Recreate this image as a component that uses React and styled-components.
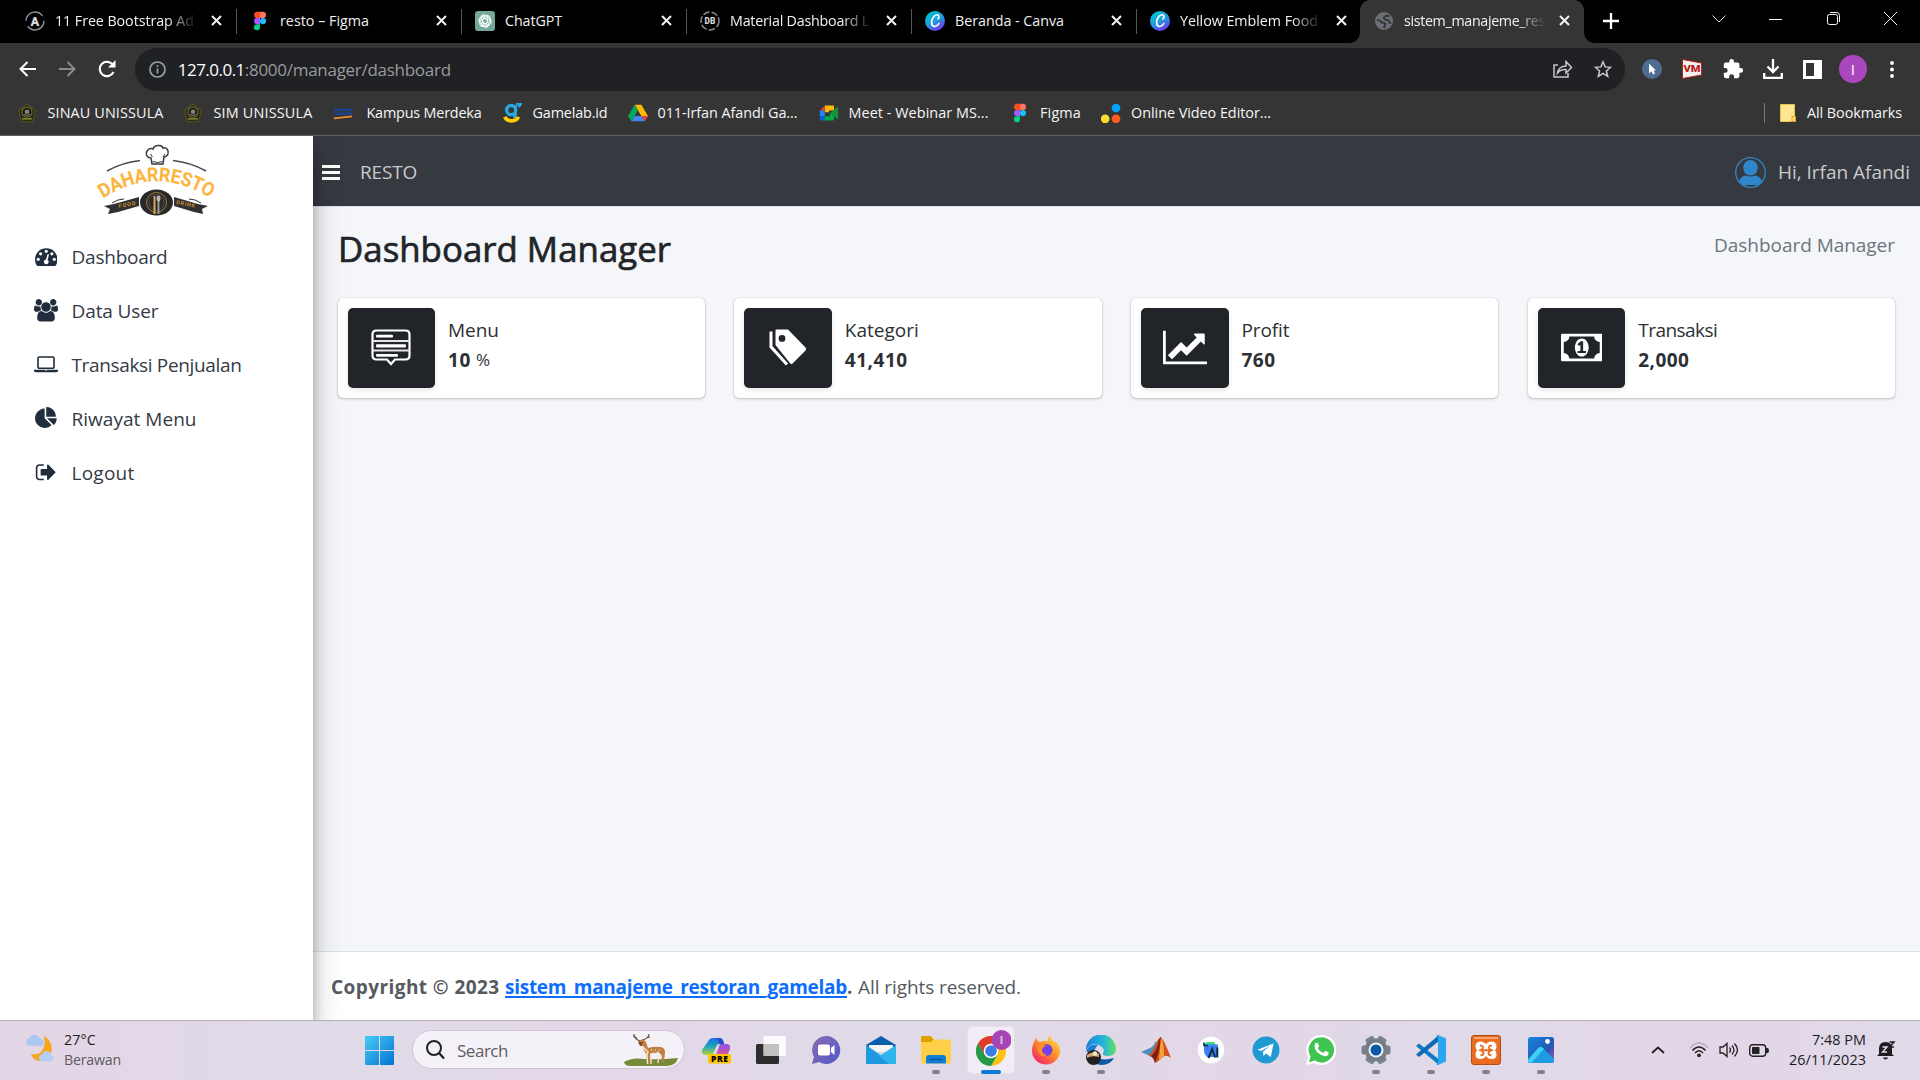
import React, { useLayoutEffect, useRef, useState } from 'react';
import styled, { createGlobalStyle, css } from 'styled-components';

const GlobalStyle = createGlobalStyle`
  * { box-sizing: border-box; }
  html, body { margin: 0; padding: 0; }
  body {
    width: 1920px; height: 1080px; overflow: hidden;
    font-family: "Open Sans", "Noto Sans", sans-serif;
    background: #000;
  }
  svg { display: block; flex: none; }
`;

/* ---------- text that keeps a fixed advance width ---------- */
const LabelBox = styled.span`
  display: inline-block;
  flex: none;
  width: ${p => p.$w}px;
  white-space: pre;
  text-decoration: inherit;
`;
function Label({ w, children }) {
  const ref = useRef(null);
  const [spacing, setSpacing] = useState(0);
  useLayoutEffect(() => {
    const natural = ref.current.getBoundingClientRect().width;
    setSpacing((w - natural) / String(children).length);
  }, []);
  return (
    <LabelBox $w={w}>
      <span ref={ref} style={{ letterSpacing: spacing }}>{children}</span>
    </LabelBox>
  );
}

/* ---------- icons ---------- */
const Icon = ({ s = 20, w, h, box = '0 0 24 24', children, ...rest }) => (
  <svg width={w || s} height={h || s} viewBox={box} fill="none" {...rest}>{children}</svg>
);
const FigmaIcon = () => (
  <Icon s={20}>
    <path d="M12 1H8.500a3.700 3.700 0 0 0 0 7.400H12z" fill="#f24e1e" />
    <path d="M12 1h3.500a3.700 3.700 0 0 1 0 7.400H12z" fill="#ff7262" />
    <path d="M12 8.400H8.500a3.700 3.700 0 0 0 0 7.400H12z" fill="#a259ff" />
    <circle cx="15.600" cy="12.100" r="3.700" fill="#1abcfe" />
    <path d="M12 15.800H8.500a3.700 3.700 0 1 0 3.500 3.700z" fill="#0acf83" />
  </Icon>
);
const RingIcon = ({ text }) => (
  <Icon s={20}>
    <circle cx="12" cy="12" r="10.800" stroke="#8b8e93" strokeWidth="1.800" strokeDasharray={text === 'A' ? '27 7' : '8 2.500'} />
    <text x="12" y={text === 'A' ? 17.500 : 15.800} textAnchor="middle" fontFamily="Roboto" fontWeight="900" fontSize={text === 'A' ? 15.500 : 10} fill="#d5d6d8">{text}</text>
  </Icon>
);
const ChatGptIcon = () => (
  <Icon s={20}>
    <rect width="24" height="24" rx="4" fill="#74aa9c" />
    {[0, 60, 120, 180, 240, 300].map(a => (
      <path key={a} transform={`rotate(${a} 12 12)`} d="M9 8.200 12.800 6a3.600 3.600 0 0 1 5.400 3.100v4M12 8.600l3 1.700v3.500" stroke="#fff" strokeWidth="1.300" />
    ))}
  </Icon>
);
const CanvaIcon = ({ id }) => (
  <Icon s={20}>
    <defs><linearGradient id={id} x1=".2" y1="0" x2=".75" y2="1"><stop stopColor="#00c4cc" /><stop offset=".5" stopColor="#1f9fe0" /><stop offset="1" stopColor="#7d2ae8" /></linearGradient></defs>
    <circle cx="12" cy="12" r="12" fill={`url(#${id})`} />
    <path d="M15.600 9.400c2-1.800 1.200-5.200-1.500-4.900-4 .5-7 6.900-6 11.200 1.100 4.200 5.900 3.600 8.500-.6" stroke="#fff" strokeWidth="2" strokeLinecap="round" />
  </Icon>
);
const GlobeIcon = () => (
  <Icon s={18}>
    <circle cx="12" cy="12" r="12" fill="#6b6f75" />
    <path d="M2.500 10.500q3.500 0 5 2t4 2 2 2.500-2 4.500M19.500 5.500q-3-1-5.500 0t-2 3 3.500 2 3.500 2.500 2.500 1.500" stroke="#353535" strokeWidth="2.600" />
  </Icon>
);
const Crest = () => (
  <Icon s={20}>
    <path d="M12 1.500 22 9l-3 13.500H5L2 9z" fill="#2a2c14" stroke="#55531f" strokeWidth="1.300" />
    <circle cx="12" cy="11" r="6" fill="#191a0c" stroke="#6f6c3c" strokeWidth="1.300" />
    <circle cx="12" cy="10.500" r="2.800" fill="#84857c" />
    <path d="M8 13.500q4 3 8 0" stroke="#84857c" strokeWidth="1.200" />
    <path d="M6 19h12" stroke="#7d7c2c" strokeWidth="2" />
  </Icon>
);
const KampusIcon = () => (
  <Icon s={20}>
    <path d="M1 8.500c3-2 4 1 7 0s5-1 8 0 4-1 7-1M2 13c4-1 7 1 11 0s6 0 9-1" stroke="#1746a0" strokeWidth="2.600" />
    <path d="M1 18.500 23 16" stroke="#f28b3a" strokeWidth="2" />
  </Icon>
);
const GamelabIcon = () => (
  <Icon s={20}>
    <circle cx="11" cy="8.500" r="5.500" stroke="#2ba7e0" strokeWidth="4" />
    <path d="M16.500 2v10c0 4-1 5-3 5.500M19 1l4-.5-2 3z" stroke="#2ba7e0" strokeWidth="3" />
    <path d="M3.500 16.500c2 6.500 14 6.500 16 0" stroke="#ffd000" strokeWidth="4.500" />
  </Icon>
);
const DriveIcon = () => (
  <Icon s={20}>
    <path d="M8 2h8l8 13.500h-8z" fill="#ffba00" /><path d="M8 2 0 15.500 4 22l8-13.300z" fill="#00a85a" />
    <path d="M4 22h16l4-6.500H8z" fill="#4285f4" /><path d="m20 22 4-6.500h-8z" fill="#ea4335" />
  </Icon>
);
const MeetIcon = () => (
  <Icon s={20}>
    <path d="M7 3h11v6h-6v2H7z" fill="#ffba00" /><path d="M1 9 7 3v6z" fill="#ea4335" /><path d="M1 9h6v7H1z" fill="#2684fc" />
    <path d="M1 16h6v5H2.500Q1 21 1 19.500z" fill="#0066da" /><path d="M7 16h6v-3l5-4v10.500q0 1.500-1.500 1.500H7z" fill="#00ac47" /><path d="m13.500 12 8-7q1.500-1 1.500 1v12q0 2-1.500 1z" fill="#14913e" />
  </Icon>
);
const DotsIcon = () => (
  <Icon s={20}>
    <circle cx="18" cy="6" r="5.200" fill="#00a4ff" /><circle cx="5" cy="19" r="5.200" fill="#ffdb2c" /><circle cx="18" cy="19" r="5.200" fill="#ff5a1f" />
  </Icon>
);
const CloseIcon = () => <Icon s={11} box="0 0 11 11"><path d="m1 1 9 9M10 1l-9 9" stroke="#f3f3f3" strokeWidth="2" /></Icon>;

/* ---------- browser chrome ---------- */
const Desktop = styled.div`
  width: 1920px; height: 1080px;
  display: flex; flex-direction: column;
`;
const TabStrip = styled.div`
  height: 43px; flex: none; background: #000; color: #f1f1f1;
  display: flex; padding-left: 11px; font-size: 14.3px;
`;
const TabIcon = styled.span`width: 20px; display: flex; justify-content: center; flex: none;`;
const TabTitle = styled.span`
  width: 142px; margin-left: 10px; margin-right: 14px; height: 22px; line-height: 21px; flex: none;
  ${p => p.$fade && css`mask-image: linear-gradient(90deg, #000 112px, transparent 142px);`}
`;
const Tab = styled.div`
  position: relative;
  width: ${p => (p.$active || p.$last ? 224 : 225)}px; height: 43px; flex: none;
  display: flex; align-items: center; padding: 0 14px 2px 14px;
  ${p => p.$active && css`
    background: #353535; border-radius: 10px 10px 0 0;
    ${TabTitle} { margin-right: 13px; }
    &::before, &::after {
      content: ''; position: absolute; bottom: 0; width: 10px; height: 10px;
    }
    &::before { left: -10px; background: radial-gradient(circle at 0 0, transparent 9.500px, #353535 10px); }
    &::after { right: -10px; background: radial-gradient(circle at 100% 0, transparent 9.500px, #353535 10px); }
  `}
`;
const Divider = styled.i`
  position: absolute; right: -1px; top: 9px; width: 1px; height: 25px; background: #55575b;
`;
const NewTab = styled.div`width: 54px; display: flex; align-items: center; justify-content: center; padding-bottom: 1px;`;
const WindowButtons = styled.div`
  margin-left: auto; display: flex; padding: 0 0 6px; width: 230px; align-items: center;
`;
const WinButton = styled.span`width: 57.300px; display: flex; justify-content: center;`;

const Toolbar = styled.div`
  height: 49px; flex: none; background: #353535; display: flex; align-items: center; padding: 4px 10px 1px 7px;
`;
const ToolButton = styled.span`
  width: ${p => p.$w || 40.100}px; display: flex; justify-content: center; flex: none;
`;
const Omnibox = styled.div`
  width: 1490px; height: 43px; border-radius: 22px; background: #202124; flex: none; margin-left: 8px; margin-right: 7px;
  display: flex; align-items: center; padding-left: 14px; padding-right: 2px; color: #fff; font-size: 17px;
`;
const UrlHost = styled.span`margin-left: 11.500px; display: flex;`;
const UrlPath = styled.span`color: #9a9b9d; flex: 1; display: flex;`;
const Avatar = styled.span`
  width: 28px; height: 28px; border-radius: 50%; background: #ab47bc; color: #fff; font-size: 15px;
  display: flex; align-items: center; justify-content: center;
`;
const Bookmarks = styled.div`
  height: 44px; flex: none; background: #353535; border-bottom: 1px solid #606062; color: #f5f5f5;
  display: flex; align-items: center; padding: 0 18px 2px 17px; font-size: 14.400px;
`;
const Bookmark = styled.div`
  width: ${p => p.$w}px; display: flex; align-items: center; gap: ${p => p.$gap || 10.500}px; flex: none;
`;
const AllBookmarks = styled.div`
  margin-left: auto; display: flex; align-items: center; gap: 11px; border-left: 1px solid #77787a; height: 20px; padding-left: 15px;
`;

/* ---------- page ---------- */
const Page = styled.div`flex: 1; min-height: 0; display: flex; background: #f4f6f9;`;
const Sidebar = styled.aside`
  position: relative; z-index: 2;
  width: 313px; flex: none; background: #fff; display: flex; flex-direction: column;
  box-shadow: 0 14px 28px rgba(0,0,0,.25), 0 10px 10px rgba(0,0,0,.22);
  clip-path: inset(0 -50px 0 0);
`;
const Brand = styled.div`height: 94px; padding: 3px 0 0 93px; flex: none;`;
const NavItem = styled.a`
  height: 54px; display: flex; align-items: center; padding-left: 34px; gap: 13.500px; color: #343a46; font-size: 19px;
`;
const NavGlyph = styled.span`width: 24px; display: flex; justify-content: center; color: #1f2d3d; padding-bottom: 1px;`;
const Main = styled.main`flex: 1; display: flex; flex-direction: column; min-width: 0;`;
const Navbar = styled.header`
  height: 71px; flex: none; background: #363940; border-bottom: 1px solid #dee2e6; color: #c9cacc;
  display: flex; align-items: center; padding: 2px 10px 0 9px; font-size: 19px;
`;
const NavTitle = styled.span`margin-left: 20px; display: flex;`;
const UserMenu = styled.span`margin-left: auto; display: flex; align-items: center; gap: 12px;`;
const Content = styled.section`flex: 1; padding: 20px 25px 0;`;
const Heading = styled.div`display: flex; justify-content: space-between; align-items: flex-start; height: 71px;`;
const Title = styled.h1`
  margin: -2px 0 0; font-size: 34.800px; line-height: 47px; font-weight: 400; color: #212529; display: flex;
  -webkit-text-stroke: .7px #212529;
`;
const Crumb = styled.span`font-size: 19px; color: #6c757d; line-height: 26px; padding-top: 5px; display: flex;`;
const Cards = styled.div`display: grid; grid-template-columns: repeat(4, 1fr); gap: 29.500px; margin-left: -.5px;`;
const Card = styled.div`
  height: 100px; background: #fff; border-radius: 5px; padding: 10px; display: flex;
  box-shadow: 0 0 1px rgba(0,0,0,.25), 0 1px 3px rgba(0,0,0,.22);
`;
const CardIcon = styled.div`
  width: 87.500px; height: 80px; border-radius: 5px; background: #212529; display: flex; align-items: center; justify-content: center;
  box-shadow: 0 2px 5px rgba(0,0,0,.1); color: #fff; padding-bottom: 1px;
`;
const CardBody = styled.div`
  padding: 7px 0 0 13px; font-size: 19px; line-height: 30px; color: #2c3034;
`;
const CardText = styled.div`display: flex; height: 30px;`;
const Strong = styled.b`font-weight: 700; display: flex;`;
const Percent = styled.small`font-size: 17px; padding-left: 5px; display: flex;`;
const Footer = styled.footer`
  height: 69px; flex: none; border-top: 1px solid #dee2e6; background: #fff; color: #555a5f;
  padding: 1px 0 0 18px; font-size: 19px; display: flex; align-items: center;
`;
const FootLink = styled.a`
  color: #0d6efd; text-decoration: underline; text-decoration-thickness: 2px; text-underline-offset: 2px; text-decoration-skip-ink: auto; display: flex;
`;

/* ---------- taskbar ---------- */
const Taskbar = styled.div`
  height: 60px; flex: none; border-top: 1px solid #b1adb6; display: flex; color: #1b1b1f;
  background: linear-gradient(90deg, #e3d6e6 0, #e0dae8 18%, #e3d7e8 32%, #e0dae8 48%, #e2d7e7 66%, #e0dae8 78%, #e3d5e8 88%, #e0dae8 100%);
`;
const Weather = styled.div`width: 365px; padding: 9px 0 0 25px; display: flex; gap: 9px;`;
const WeatherIcon = styled.span`padding-top: 4px;`;
const WeatherText = styled.div`font-size: 14.200px; line-height: 20px; display: flex; flex-direction: column;`;
const Muted = styled.span`color: #5c5a60; display: flex;`;
const StartButton = styled.div`width: 29px; padding-top: 15px; margin-right: 18px;`;
const SearchBox = styled.div`
  width: 273px; height: 39px; margin-top: 9px; border-radius: 20px; background: #f5f1f8; border: 1px solid #d0c6d4;
  display: flex; align-items: center; padding: 1px 5px 0 12px; gap: 12px; font-size: 17px; color: #5e5c62;
`;
const Deer = styled.span`margin-left: auto;`;
const Apps = styled.div`display: flex; margin-left: 3px;`;
const AppSlot = styled.div`
  width: 55px; height: 59px; display: flex; flex-direction: column; align-items: center; position: relative; padding-top: 14px;
`;
const AppFrame = styled.div`
  width: 48px; height: 48px; margin-top: -9px; padding-top: 3px; border-radius: 5px; background: #f1ecf5; border: 1px solid #e7e1eb;
  display: flex; justify-content: center;
`;
const Running = styled.i`
  position: absolute; top: 49px; height: 4px; border-radius: 2px;
  width: ${p => (p.$active ? 20 : 8)}px; background: ${p => (p.$active ? '#0a78d4' : '#867f8b')};
`;
const Tray = styled.div`margin-left: auto; display: flex; align-items: center; padding-right: 13px; height: 59px;`;
const TrayCell = styled.span`width: ${p => p.$w || 30}px; display: flex; justify-content: center; padding-bottom: 1px;`;
const Clock = styled.div`
  width: 92px; margin-right: 1px; font-size: 14.400px; line-height: 20px; display: flex; flex-direction: column; align-items: flex-end; padding-bottom: 1px;
`;

const Pre = () => (
  <Icon s={30} box="-1 0 30 30">
    <defs><linearGradient id="cpA" x1="0" y1="0" x2="0" y2="1"><stop stopColor="#1b6fe0" /><stop offset=".5" stopColor="#1fa5b8" /><stop offset="1" stopColor="#b5d33c" /></linearGradient>
      <linearGradient id="cpB" x1="0" y1="0" x2="0" y2="1"><stop stopColor="#8b52e8" /><stop offset="1" stopColor="#f0588a" /></linearGradient></defs>
    <path d="M7 5q1-2 4-2h7q3 0 4 6h-5q-2 0-3 3l-2 5q-1 3-5 3H4q-5 0-4-5z" fill="url(#cpA)" />
    <path d="M14 3h4q3 0 4 6h-5q-1-5-3-6z" fill="#2450cf" />
    <path d="M18 9h6q5 0 4 5l-2 5q-1 4-6 4h-9q3-2 4-6z" fill="url(#cpB)" />
    <rect x="6" y="19" width="23" height="9.500" rx="2" fill="#ffc400" />
    <text x="17.500" y="26.800" fontSize="8.500" fontWeight="800" fontFamily="Open Sans" textAnchor="middle" fill="#000" textLength="17">PRE</text>
  </Icon>
);
const TaskView = () => (
  <Icon s={30} box="0 0 30 30"><rect y="9" width="23" height="20" rx="1.500" fill="#2d2d2d" /><rect x="7.500" y="1" width="22.500" height="20" rx="1.500" fill="#fff" opacity=".85" /><rect x="7.500" y="9" width="15.500" height="12" fill="#b9b9b9" opacity=".8" /></Icon>
);
const Chat = () => (
  <Icon s={30} box="0 0 30 30"><defs><linearGradient id="chat" x1="0" y1="0" x2="1" y2="1"><stop stopColor="#8a6cae" /><stop offset="1" stopColor="#5059c9" /></linearGradient></defs>
    <path d="M15 1a14 14 0 1 1-7 26l-7 2 2-7A14 14 0 0 1 15 1z" fill="url(#chat)" /><rect x="7" y="9.500" width="12" height="11" rx="2" fill="#fff" /><path d="m20 13 3.500-3v10L20 17z" fill="#fff" /></Icon>
);
const Mail = () => (
  <Icon s={30} box="0 0 30 30"><path d="M0 10 15 1l15 9v6H0z" fill="#0b5cad" /><path d="M3 10h24v7H3z" fill="#f4f4f4" /><path d="M0 10v19h30V10L15 20z" fill="#2fb4ee" /><path d="m0 10 23 19H0z" fill="#1f98e0" /></Icon>
);
const Explorer = () => (
  <Icon s={30} box="0 0 30 30"><path d="M0 2q0-1 1.500-1H10l3 4h15.500Q30 5 30 6.500V12H0z" fill="#e0a100" /><path d="M0 7h10l3-2.500h15.500Q30 4.500 30 6v21q0 1.500-1.500 1.500h-27Q0 28.500 0 27z" fill="#ffcf48" /><path d="M5 28.500V23q0-3 3-3h14q3 0 3 3v5.500z" fill="#117dd2" /><path d="M9 24.500h12" stroke="#0a5599" strokeWidth="1.500" /></Icon>
);
const Chrome = () => (
  <Icon w={40} h={36} box="-5 -6 40 36"><circle cx="15" cy="15" r="15" fill="#fbc116" />
    <path d="M2 7.500A15 15 0 0 1 28 7.500H15L8.500 19z" fill="#e33b2e" /><path d="M2 7.500A15 15 0 0 0 15 30l6.500-11.200H8.500z" fill="#229a4c" />
    <circle cx="15" cy="15" r="7.300" fill="#fff" /><circle cx="15" cy="15" r="5.800" fill="#3b7de9" />
    <circle cx="25.500" cy="4" r="10" fill="#a645b5" /><path d="M25.500 0v8" stroke="#dcb9e2" strokeWidth="2" /></Icon>
);
const Firefox = () => (
  <Icon s={30} box="0 0 30 30"><defs><linearGradient id="ff" x1="1" y1="0" x2=".2" y2="1"><stop stopColor="#fff14a" /><stop offset=".45" stopColor="#ff9a26" /><stop offset="1" stopColor="#f3206b" /></linearGradient></defs>
    <path d="M5 3q1 3 4 4 5-2 8-1 0-4 2-6 1 5 5 8 0-2-1-3 6 5 6 11a14 13.500 0 0 1-28 0Q1 9 5 3z" fill="url(#ff)" /><circle cx="15.500" cy="15" r="6" fill="#7542e5" /><path d="M6 10q6-2 9 1-4 1-4 4 0 4 5 5-6 3-9-3z" fill="#ff8f20" /></Icon>
);
const Edge = () => (
  <Icon s={30} box="0 0 30 30"><defs><linearGradient id="edge" x1="0" x2="1"><stop stopColor="#1583d8" /><stop offset=".6" stopColor="#28b8d8" /><stop offset="1" stopColor="#62e25e" /></linearGradient></defs>
    <path d="M0 15a15 15 0 0 1 30-1q0 7-8 7-6 0-5-3 2-3-1-6-9-7-16 3z" fill="url(#edge)" /><path d="M9 16q1 12 19 7-4 7-12 7-9 0-11-8z" fill="#0c59a4" /><path d="M0 16q4-8 12-6-6 5-1 13z" fill="#1b7fd4" />
    <circle cx="7.500" cy="22.500" r="7.500" fill="#24201d" /><path d="M1 20q6-5 12-1v3q-7-2-12 1z" fill="#d6a572" /><circle cx="9" cy="18.500" r="2.200" fill="#f4e5cf" /></Icon>
);
const Matlab = () => (
  <Icon s={30} box="0 0 30 30"><path d="m0 17 9-4q3-1 6-7l2 4-7 12-3-2z" fill="#4b8fbe" /><path d="M7 20q4-1 7-9 3-8 6-9 3 3 10 21-5-4-8-1-4 4-8 6-1-6-7-8z" fill="#d2511e" /><path d="M20 2q-1 14-6 26-1-5-4-7 5-4 7-12 1-6 3-7z" fill="#7c1d18" /><path d="M20 2q3 6 3 19l-5 4z" fill="#f7a437" /></Icon>
);
const AndroidStudio = () => (
  <Icon s={30} box="0 0 30 30"><circle cx="15" cy="15" r="13.300" fill="#fff" /><path d="M8.500 10V8.500l3-1.500h6.500l2 3z" fill="#3ddc84" /><path d="M8 9.500h14V22H11q-3-3-3-6z" fill="#3f7df2" /><path d="M8 7.500v3h4" stroke="#073042" strokeWidth="1.600" /><path d="m12.500 23 3.700-9 3 8.500M21.300 12.500v10" stroke="#073042" strokeWidth="2" /></Icon>
);
const Telegram = () => (
  <Icon s={30} box="0 0 30 30"><circle cx="15" cy="15" r="13.500" fill="#2199d3" /><path d="m6.500 14.800 16-6.300-2.700 13.600-4.800-3.600-2.500 2.400-.5-4.200 7.300-6.300-9 5.500z" fill="#fff" /></Icon>
);
const WhatsApp = () => (
  <Icon s={30} box="0 0 30 30"><path d="M15 0a15 15 0 1 1-7 28l-8 2 2-8A15 15 0 0 1 15 0z" fill="#fff" /><path d="M15.300 2.300a12.600 12.600 0 1 1-6.500 23.300L3 27.200l1.600-5.600A12.600 12.600 0 0 1 15.300 2.300z" fill="#3fc351" /><path d="M9 8.500q2-1.700 3 0l1 2.500q0 1-1.300 2.200 2 3.600 5.600 4.800l1.500-1.800q.8-.6 3.700 1.200 1 .8-.8 3-3 2-8.200-1.300Q7 14.500 9 8.500z" fill="#fff" /></Icon>
);
const Settings = () => (
  <Icon s={30} box="0 0 30 30">{[0, 60, 120].map(a => <rect key={a} x="10.500" y="0.500" width="9" height="29" rx="2" fill="#78838c" transform={`rotate(${a + 30} 15 15)`} />)}
    <circle cx="15" cy="15" r="11.500" fill="#737e87" /><circle cx="15" cy="15" r="7.500" fill="#f2f4f6" /><circle cx="15" cy="15" r="5.500" fill="#0b58a8" /></Icon>
);
const VsCode = () => (
  <Icon s={30} box="0 0 30 30"><path d="M0 11 3 8.500l20 16V30z" fill="#0b7bc7" /><path d="M0 19.500 3 22 23 6V0z" fill="#0c6cb5" /><path d="m22 0 8 3.500v23L22 30q-1 0-2-1 2 0 2-2V3q0-2-2-2 1-1 2-1z" fill="#2aa5f2" /></Icon>
);
const Xampp = () => (
  <Icon s={30} box="0 0 30 30"><rect x=".5" y=".5" width="29" height="29" rx="2.500" fill="#ea6c20" stroke="#b04d12" /><path d="M3 3h24" stroke="#f5a471" strokeWidth="2" />
    <path d="M10 6.500q3 0 5 2.500 2-2.500 5-2.500 5.500 0 5.500 5 0 2-1.500 3.800 1.500 1.700 1.500 4.200 0 4.500-5 4.500-3.500 0-5.500-3-2 3-5.500 3-5 0-5-4.500 0-2.500 1.500-4.200-1.500-1.800-1.500-3.800 0-5 5.500-5z" fill="#fff" />
    <path d="M9 10.700q3-.5 3 2 0 1.500-2.500 2.500 3 1 3 3 0 2-3 2M21 10.700q-3-.5-3 2 0 1.500 2.500 2.500-3 1-3 3 0 2 3 2M11 15.200h8" stroke="#ea6c20" strokeWidth="1.900" /></Icon>
);
const Photos = () => (
  <Icon s={30} box="0 0 30 30"><defs><linearGradient id="pho" x1="0" y1="0" x2="1" y2="1"><stop stopColor="#1489e0" /><stop offset=".6" stopColor="#2456b5" /><stop offset="1" stopColor="#b052a8" /></linearGradient></defs>
    <rect x="2" y="2" width="26" height="26" rx="2.500" fill="url(#pho)" /><path d="m2 24 10-11q2.500-2.500 5 0l11 11v1.500q0 2.500-2.500 2.500h-21Q2 28 2 25.500z" fill="#1f9be3" /><path d="M2 25 12.500 13q2-2 4.500 0l1 1L5 28Q2 28 2 25z" fill="#3fd2f7" /><circle cx="21.500" cy="6.500" r="2.400" fill="#fff" /></Icon>
);

const APPS = [
  [Pre], [TaskView], [Chat], [Mail], [Explorer, 1], [Chrome, 2], [Firefox, 1], [Edge, 1], [Matlab], [AndroidStudio],
  [Telegram], [WhatsApp], [Settings, 1], [VsCode, 1], [Xampp, 1], [Photos, 1],
];

const Logo = () => (
  <Icon w={126} h={84} box="93 139 126 84" overflow="visible">
    <defs><path id="arch" d="M103 198.500Q156.500 163 214 200" /></defs>
    <path d="M151 158c-4 0-6-4-4-7s5-3 6-2c1-4 9-5 10-1 4-1 6 3 5 6-1 2-3 3-4 3l-1 7h-11z" stroke="#39393b" strokeWidth="1.500" />
    <path d="M152.500 161.500q5 2 10 0M150.500 154l2 3M163 157l2-3" stroke="#39393b" />
    <path d="M107 171Q122 162.500 140 160.500M173 160.500Q191 162.500 206 171" stroke="#4a4a4c" strokeWidth="1.500" />
    <text fontFamily="Roboto" fontWeight="600" fontSize="19" fill="#fbb53c" stroke="#fbb53c" strokeWidth=".3">
      <textPath href="#arch" textLength="114" lengthAdjust="spacingAndGlyphs">DAHARRESTO</textPath>
    </text>
    <path d="m104 206 10-2 25-7v9l-21 6-10 2 2-5zM208 206l-10-2-24-7v9l20 6 9 2-1-5z" fill="#313133" />
    <path d="M112 203q6-4 12-4M201 203q-6-4-12-4" stroke="#313133" />
    <text x="119" y="208" transform="rotate(-11 119 208)" fontFamily="Roboto" fontWeight="700" fontSize="5.500" fill="#c18b2c" textLength="17">FOOD</text>
    <text x="176" y="204" transform="rotate(11 176 204)" fontFamily="Roboto" fontWeight="700" fontSize="5.500" fill="#c18b2c" textLength="19">DRINK</text>
    <ellipse cx="156.500" cy="202.500" rx="16.500" ry="13" fill="#29292b" />
    <ellipse cx="156.500" cy="202.500" rx="10" ry="10" stroke="#a57c38" /><ellipse cx="156.500" cy="202.500" rx="7.500" ry="8" stroke="#55504a" />
    <path d="M154.500 196v18" stroke="#d9a650" strokeWidth="2" /><path d="M158.500 197v17" stroke="#a6a6a6" strokeWidth="1.700" /><ellipse cx="158.500" cy="198.500" rx="2" ry="3" fill="#b9b9b9" />
  </Icon>
);

const GAUGE = 'M384 1152q0-53-37.5-90.5t-90.5-37.5-90.5 37.5-37.5 90.5 37.5 90.5 90.5 37.5 90.5-37.5 37.5-90.5zm192-448q0-53-37.5-90.5t-90.5-37.5-90.5 37.5-37.5 90.5 37.5 90.5 90.5 37.5 90.5-37.5 37.5-90.5zm428 481l101-382q6-26-7.5-48.5t-38.5-29.5-48 6.5-30 39.5l-101 382q-60 5-107 43.5t-63 98.5q-20 77 20 146t117 89 146-20 89-117q16-60-6-117t-72-91zm660-33q0-53-37.5-90.5t-90.5-37.5-90.5 37.5-37.5 90.5 37.5 90.5 90.5 37.5 90.5-37.5 37.5-90.5zm-640-640q0-53-37.5-90.5t-90.5-37.5-90.5 37.5-37.5 90.5 37.5 90.5 90.5 37.5 90.5-37.5 37.5-90.5zm448 192q0-53-37.5-90.5t-90.5-37.5-90.5 37.5-37.5 90.5 37.5 90.5 90.5 37.5 90.5-37.5 37.5-90.5zm320 448q0 261-141 483-19 29-54 29h-1402q-35 0-54-29-141-221-141-483 0-182 71-348t191-286 286-191 348-71 348 71 286 191 191 286 71 348z';
const USERS = 'M593 896q-162 5-265 128h-134q-82 0-138-40.5t-56-118.5q0-353 124-353 6 0 43.5 21t97.5 42.5 119 21.5q67 0 133-23-5 37-5 66 0 139 81 256zm1071 637q0 120-73 189.5t-194 69.5h-874q-121 0-194-69.5t-73-189.5q0-53 3.5-103.5t14-109 26.5-108.5 43-97.5 62-81 85.5-53.5 111.5-20q10 0 43 21.5t73 48 107 48 135 21.5 135-21.5 107-48 73-48 43-21.5q61 0 111.5 20t85.5 53.5 62 81 43 97.5 26.5 108.5 14 109 3.5 103.5zm-1024-1277q0 106-75 181t-181 75-181-75-75-181 75-181 181-75 181 75 75 181zm704 384q0 159-112.5 271.5t-271.5 112.5-271.5-112.5-112.5-271.5 112.5-271.5 271.5-112.5 271.5 112.5 112.5 271.5zm576 225q0 78-56 118.5t-138 40.5h-134q-103-123-265-128 81-117 81-256 0-29-5-66 66 23 133 23 59 0 119-21.5t97.5-42.5 43.5-21q124 0 124 353zm-128-609q0 106-75 181t-181 75-181-75-75-181 75-181 181-75 181 75 75 181z';
const LAPTOP = 'M416 1280q-66 0-113-47t-47-113v-704q0-66 47-113t113-47h1088q66 0 113 47t47 113v704q0 66-47 113t-113 47h-1088zm-32-864v704q0 13 9.5 22.5t22.5 9.5h1088q13 0 22.5-9.5t9.5-22.5v-704q0-13-9.5-22.5t-22.5-9.5h-1088q-13 0-22.5 9.5t-9.5 22.5zm1376 928h160v96q0 40-47 68t-113 28h-1600q-66 0-113-28t-47-68v-96h1760zm-720 96q16 0 16-16t-16-16h-160q-16 0-16 16t16 16h160z';
const PIE = 'M768 890l546 546q-106 108-247.5 168t-298.5 60q-209 0-385.5-103t-279.5-279.5-103-385.5 103-385.5 279.5-279.5 385.5-103v762zm187 6h773q0 157-60 298.5t-168 247.5zm709-128h-768v-768q209 0 385.5 103t279.5 279.5 103 385.5z';
const EXIT = 'M704 1440q0 4 1 20t.5 26.5-3 23.5-10 19.5-20.5 6.5h-320q-119 0-203.5-84.5t-84.5-203.5v-704q0-119 84.5-203.5t203.5-84.5h320q13 0 22.5 9.5t9.5 22.5q0 4 1 20t.5 26.5-3 23.5-10 19.5-20.5 6.5h-320q-66 0-113 47t-47 113v704q0 66 47 113t113 47h312l11.5 1 11.5 3 8 5.5 7 9 2 13.5zm928-544q0 26-19 45l-544 544q-19 19-45 19t-45-19-19-45v-288h-448q-26 0-45-19t-19-45v-384q0-26 19-45t45-19h448v-288q0-26 19-45t45-19 45 19l544 544q19 19 19 45z';
const LINE = 'M2048 1536v128h-2048v-1536h128v1408h1920zM1920 288v435q0 21-19.5 29.5t-35.5-7.5l-121-121-633 633q-10 10-23 10t-23-10l-233-233-416 416-192-192 585-585q10-10 23-10t23 10l233 233 464-464-121-121q-16-16-7.5-35.5t29.5-19.5h435q14 0 23 9t9 23z';
const MONEY = 'M768 1152h384v-96h-128v-448h-114l-148 137 77 80q42-37 55-57h2v288h-128v96zm512-256q0 70-21 142t-59.5 134-101.5 101-138 39-138-39-101.5-101-59.5-134-21-142 21-142 59.5-134 101.5-101 138-39 138 39 101.5 101 59.5 134 21 142zm512 256v-512q-106 0-181-75t-75-181h-1152q0 106-75 181t-181 75v512q106 0 181 75t75 181h1152q0-106 75-181t181-75zm128-832v1152q0 26-19 45t-45 19h-1792q-26 0-45-19t-19-45v-1152q0-26 19-45t45-19h1792q26 0 45 19t19 45z';
const Solid = ({ d, vw, w, h }) => <svg width={w} height={h} viewBox={`0 0 ${vw} 1792`} fill="currentColor"><path d={d} /></svg>;

const NAV = [
  ['Dashboard', 96, GAUGE, 1792, 22.500, 22.500],
  ['Data User', 87, USERS, 1920, 24, 22.400],
  ['Transaksi Penjualan', 170, LAPTOP, 1920, 24, 22.400],
  ['Riwayat Menu', 125, PIE, 1792, 22.500, 22.500],
  ['Logout', 63, EXIT, 1792, 22.500, 22.500],
];

const MenuGlyph = () => (
  <Icon w={40} h={37} box="0 0 40 37">
    <path d="M5.500 1.500h29q4 0 4 4v21q0 4-4 4H24L20 35l-4-4.500H5.500q-4 0-4-4v-21q0-4 4-4z" stroke="#fff" strokeWidth="2.200" />
    <rect x="5" y="5.800" width="17" height="2.800" rx="1" fill="#fff" /><path d="M2 12h36M2 21.500h36" stroke="#e8e4ea" strokeWidth="2.200" />
    <rect x="5" y="15.200" width="30" height="3.200" rx="1" fill="#fff" /><rect x="5" y="25" width="22" height="2.800" rx="1" fill="#fff" />
  </Icon>
);
const TagGlyph = () => (
  <Icon w={40} h={37} box="0 0 40 37">
    <path fillRule="evenodd" d="M7.500 1.500Q7.500.5 8.500.5h11.500l17.500 18q1.500 1.500 0 3L24.500 34.500q-1 1-2.200 0L7.500 16zM14 6a3.400 3.400 0 1 0 0 6.800A3.400 3.400 0 0 0 14 6z" fill="#fff" />
    <path d="M5.300 1v16.500L22 36" stroke="#212529" strokeWidth="1.500" /><path d="M3 2.500v15.300L19 35.500" stroke="#fff" strokeWidth="3" />
  </Icon>
);
const CARDS = [
  ['Menu', 51, '10', 23, <MenuGlyph />, '%'],
  ['Kategori', 74, '41,410', 63, <TagGlyph />],
  ['Profit', 48, '760', 34, <Solid d={LINE} vw={2048} w={44.500} h={39} />],
  ['Transaksi', 79, '2,000', 51, <Solid d={MONEY} vw={1920} w={41.500} h={39} />],
];

const TABS = [
  ['11 Free Bootstrap Ad', 139, <RingIcon text="A" />, true],
  ['resto – Figma', 89, <FigmaIcon />],
  ['ChatGPT', 57, <ChatGptIcon />],
  ['Material Dashboard L', 139, <RingIcon text="DB" />, true],
  ['Beranda - Canva', 109, <CanvaIcon id="cv1" />],
  ['Yellow Emblem Food', 138, <CanvaIcon id="cv2" />, true],
  ['sistem_manajeme_res', 141, <GlobeIcon />, true],
];
const MARKS = [
  ['SINAU UNISSULA', 116, <Crest />, 166], ['SIM UNISSULA', 99, <Crest />, 150], ['Kampus Merdeka', 115, <KampusIcon />, 169, 13.500],
  ['Gamelab.id', 75, <GamelabIcon />, 126], ['011-Irfan Afandi Ga...', 140, <DriveIcon />, 191, 9.500], ['Meet - Webinar MS...', 140, <MeetIcon />, 191, 9.500],
  ['Figma', 41, <FigmaIcon />, 91, 10], ['Online Video Editor...', 140, <DotsIcon />, 171, 10],
];

export default function App() {
  return (
    <Desktop>
      <GlobalStyle />
      <TabStrip>
        {TABS.map(([t, w, ic, fade], i) => (
          <Tab key={t} $active={i === 6} $last={i === 5}>
            <TabIcon>{ic}</TabIcon>
            <TabTitle $fade={fade}><Label w={w}>{t}</Label></TabTitle>
            <CloseIcon />
            {i < 5 && <Divider />}
          </Tab>
        ))}
        <NewTab><Icon s={16} box="0 0 16 16"><path d="M8 0v16M0 8h16" stroke="#fff" strokeWidth="2.300" /></Icon></NewTab>
        <WindowButtons>
          <WinButton><Icon w={14} h={8} box="0 0 14 8"><path d="m.5.5 6.500 6.500L13.500.5" stroke="#ddd" /></Icon></WinButton>
          <WinButton><Icon w={13} h={2} box="0 0 13 2"><path d="M0 1.500h13" stroke="#fff" /></Icon></WinButton>
          <WinButton><Icon s={13} box="0 0 13 13"><rect x=".5" y="2.500" width="10" height="10" rx="2" stroke="#fff" /><path d="M3 .5h6.500q3 0 3 3V10" stroke="#fff" /></Icon></WinButton>
          <WinButton><Icon s={13} box="0 0 13 13"><path d="m0 0 13 13M13 0 0 13" stroke="#fff" /></Icon></WinButton>
        </WindowButtons>
      </TabStrip>
      <Toolbar>
        <ToolButton><Icon w={17} h={16} box="0 0 17 16"><path d="M17 8H1.500M8.500 1l-7 7 7 7" stroke="#fff" strokeWidth="2" /></Icon></ToolButton>
        <ToolButton><Icon w={17} h={16} box="0 0 17 16"><path d="M0 8h15.500M8.500 1l7 7-7 7" stroke="#8b8b8b" strokeWidth="2" /></Icon></ToolButton>
        <ToolButton><Icon s={18} box="0 0 18 18"><path d="M15.500 12A7.200 7.200 0 1 1 15 5" stroke="#fff" strokeWidth="2.200" /><path d="M17.500 0v7.500H10z" fill="#fff" /></Icon></ToolButton>
        <Omnibox>
          <Icon s={17} box="0 0 17 17"><circle cx="8.500" cy="8.500" r="7.500" stroke="#9aa0a6" strokeWidth="1.700" /><path d="M8.500 7.500v5M8.500 4.300v1.800" stroke="#9aa0a6" strokeWidth="1.700" /></Icon>
          <UrlHost><Label w={67}>127.0.0.1</Label></UrlHost>
          <UrlPath><Label w={206}>:8000/manager/dashboard</Label></UrlPath>
          <ToolButton><Icon w={20} h={18} box="0 0 20 18"><path d="M5 5H1v12h14v-4" stroke="#c6c8ca" strokeWidth="1.500" /><path d="M4.500 13Q6 6 13 6V1.500L18.500 7.500 13 13V9.500Q8 9 4.500 13z" stroke="#c6c8ca" strokeWidth="1.500" /></Icon></ToolButton>
          <ToolButton><Icon s={18} box="0 0 18 18"><path d="m9 1.800 2.100 5.100 5.500.4-4.200 3.600 1.300 5.400L9 13.400l-4.700 2.900 1.300-5.400-4.200-3.600 5.500-.4z" stroke="#c6c8ca" strokeWidth="1.500" /></Icon></ToolButton>
        </Omnibox>
        <ToolButton><Icon s={20} box="0 0 20 20"><circle cx="10" cy="10" r="10" fill="#4f6b92" /><path d="M7 4.500v10l2.500-2.300L11 15.500l2-1-1.500-3H14z" fill="#fff" /></Icon></ToolButton>
        <ToolButton><Icon s={20} box="0 0 20 20"><path d="m.5.500 19 3.500v12L.5 19.500z" fill="#f2f2f2" stroke="#b71c1c" /><text x="10" y="13.300" textAnchor="middle" textLength="17" lengthAdjust="spacingAndGlyphs" fontSize="9.500" fontWeight="900" fontFamily="Roboto" fill="#b71c1c">VM</text></Icon></ToolButton>
        <ToolButton><Icon s={22}><path d="M20.500 11H19V7a2 2 0 0 0-2-2h-4V3.500a2.500 2.500 0 0 0-5 0V5H4a2 2 0 0 0-2 2v3.800h1.500a2.700 2.700 0 0 1 0 5.400H2V20a2 2 0 0 0 2 2h3.800v-1.500a2.700 2.700 0 0 1 5.400 0V22H17a2 2 0 0 0 2-2v-4h1.500a2.500 2.500 0 0 0 0-5z" fill="#fff" /></Icon></ToolButton>
        <ToolButton><Icon s={20} box="0 0 20 20"><path d="M10 0v13M4.500 7.500 10 13l5.500-5.500M1.200 14v4.800h17.600V14" stroke="#fff" strokeWidth="2.300" /></Icon></ToolButton>
        <ToolButton><Icon s={19} box="0 0 19 19"><path fillRule="evenodd" d="M0 0h19v19H0zM3 3v13h8V3z" fill="#fff" /></Icon></ToolButton>
        <ToolButton><Avatar>I</Avatar></ToolButton>
        <ToolButton $w={38}><Icon w={4} h={17} box="0 0 4 17"><circle cx="2" cy="2" r="1.900" fill="#fff" /><circle cx="2" cy="8.500" r="1.900" fill="#fff" /><circle cx="2" cy="15" r="1.900" fill="#fff" /></Icon></ToolButton>
      </Toolbar>
      <Bookmarks>
        {MARKS.map(([t, w, ic, bw, gap]) => <Bookmark key={t} $w={bw} $gap={gap}>{ic}<Label w={w}>{t}</Label></Bookmark>)}
        <AllBookmarks>
          <Icon w={16} h={18} box="0 0 16 18"><path d="M.5.5h14v12h1v5H.5z" fill="#ffe591" stroke="#e8c24a" /><path d="M12 17.500v-5h3.500v5z" fill="#ffdf70" stroke="#d9a520" /></Icon>
          <Label w={95}>All Bookmarks</Label>
        </AllBookmarks>
      </Bookmarks>

      <Page>
        <Sidebar>
          <Brand><Logo /></Brand>
          {NAV.map(([t, w, d, vw, iw, ih]) => (
            <NavItem key={t}><NavGlyph><Solid d={d} vw={vw} w={iw} h={ih} /></NavGlyph><Label w={w}>{t}</Label></NavItem>
          ))}
        </Sidebar>
        <Main>
          <Navbar>
            <Icon w={18} h={15} box="0 0 18 15"><path d="M0 1.500h18M0 7.500h18M0 13.500h18" stroke="#fff" strokeWidth="2.800" /></Icon>
            <NavTitle><Label w={57}>RESTO</Label></NavTitle>
            <UserMenu>
              <Icon s={31} box="0 0 31 31"><circle cx="15.500" cy="15.500" r="14.800" stroke="#2f86c8" strokeWidth="1.300" /><ellipse cx="15.500" cy="10.700" rx="7.300" ry="7.800" fill="#2f86c8" /><path d="M4 24.500q2-5.500 7-6 4.500 2 9 0 5 .5 7 6-3 3.500-5 3.500H9q-3-1-5-3.500z" fill="#2f86c8" /></Icon>
              <Label w={132}>Hi, Irfan Afandi</Label>
            </UserMenu>
          </Navbar>
          <Content>
            <Heading>
              <Title><Label w={333}>Dashboard Manager</Label></Title>
              <Crumb><Label w={181}>Dashboard Manager</Label></Crumb>
            </Heading>
            <Cards>
              {CARDS.map(([t, w, n, nw, ic, unit]) => (
                <Card key={t}>
                  <CardIcon>{ic}</CardIcon>
                  <CardBody>
                    <CardText><Label w={w}>{t}</Label></CardText>
                    <CardText><Strong><Label w={nw}>{n}</Label></Strong>{unit && <Percent>{unit}</Percent>}</CardText>
                  </CardBody>
                </Card>
              ))}
            </Cards>
          </Content>
          <Footer>
            <Strong><Label w={174}>Copyright © 2023 </Label><FootLink><Label w={342}>sistem_manajeme_restoran_gamelab</Label></FootLink><Label w={11}>. </Label></Strong>
            <Label w={163}>All rights reserved.</Label>
          </Footer>
        </Main>
      </Page>

      <Taskbar>
        <Weather>
          <WeatherIcon>
            <Icon w={30} h={29} box="0 0 30 32">
              <path d="M19 2q10 6 9 16-3 11-13 12-8-1-10-8 11 2 14-7 2-6 0-13z" fill="#f5a623" />
              <path d="M5 13q-5 0-5-4t4-4q1-5 6-4 4 1 4 4 5 0 5 4t-4 4z" fill="#a9c8f2" /><path d="M18 30q-5 0-4-5 1-3 4-3 1-4 5-3 3 0 4 4 4 1 3 5-1 2-3 2z" fill="#b4cef5" />
            </Icon>
          </WeatherIcon>
          <WeatherText><Label w={32}>27°C</Label><Muted><Label w={57}>Berawan</Label></Muted></WeatherText>
        </Weather>
        <StartButton>
          <Icon s={29} box="0 0 29 29"><defs><linearGradient id="win" x1="0" y1="0" x2="1" y2="1"><stop stopColor="#48cbf7" /><stop offset="1" stopColor="#0272cf" /></linearGradient></defs>
            <path d="M0 1q0-1 1-1h13v14H0zM15 0h13q1 0 1 1v13H15zM0 15h14v14H1q-1 0-1-1zM15 15h14v13q0 1-1 1H15z" fill="url(#win)" /></Icon>
        </StartButton>
        <SearchBox>
          <Icon s={20} box="0 0 20 20"><circle cx="9" cy="8" r="7" stroke="#222" strokeWidth="2" /><path d="m14 13 5 5.500" stroke="#222" strokeWidth="2.300" /></Icon>
          <Label w={51}>Search</Label>
          <Deer>
            <Icon w={56} h={34} box="0 0 56 34">
              <path d="M1 29q8-5 20-3 15 1 34-1-2 8-12 8H7q-5 0-6-4z" fill="#768a3a" />
              <path d="m15 8 5-2 3 3 2 6q7-2 13-1 4 1 4 5l-1 10h-1.600l-1-7-3-3q-4 2-8 1l-1 11h-2l-1-9q-4-3-4-10z" fill="#c27f43" />
              <path d="M19 13q2 7 5 9l1-3zM24 22l.5 9M28 22v9M36 21l-1 9" stroke="#f2e3cc" strokeWidth="1.400" />
              <path d="M17 8q-6-2-6-7m3 4-4-2M20 7q6-2 6-6m-3 4 4-1" stroke="#6b5641" strokeWidth="1.200" />
              <path d="M28 17h1m3 0h1m3 0h1m-7 3h1m3-1h1" stroke="#fff" /><path d="M15 9h5l-1 4h-2z" fill="#8b5228" />
            </Icon>
          </Deer>
        </SearchBox>
        <Apps>
          {APPS.map(([G, run], i) => (
            <AppSlot key={i}>
              {run === 2 ? <AppFrame><G /></AppFrame> : <G />}
              {run && <Running $active={run === 2} />}
            </AppSlot>
          ))}
        </Apps>
        <Tray>
          <TrayCell $w={52}><Icon w={14} h={8} box="0 0 14 8"><path d="m1 7 6-5.500L13 7" stroke="#222" strokeWidth="1.800" /></Icon></TrayCell>
          <TrayCell><Icon w={20} h={16} box="0 0 20 16"><path d="M1 6Q10-4 19 6" stroke="#b5aebb" strokeWidth="1.300" /><path d="M3.500 8.500q6.500-7 13 0M6 11q4-4.500 8 0" stroke="#222" strokeWidth="1.500" /><circle cx="10" cy="13.300" r="1.900" fill="#222" /></Icon></TrayCell>
          <TrayCell><Icon w={20} h={16} box="0 0 20 16"><path d="M1 5h3l4-3.500v13L4 11H1zM10.500 5.500q2 2.500 0 5M13 3.500q4 4.500 0 9M15.500 1.500q6 6.500 0 13" stroke="#222" strokeWidth="1.300" /></Icon></TrayCell>
          <TrayCell><Icon w={20} h={13} box="0 0 20 13"><rect x=".7" y=".7" width="16" height="11.500" rx="3" stroke="#222" strokeWidth="1.400" /><rect x="3" y="3" width="7.500" height="7" rx=".8" fill="#222" /><path d="M17 4h1.500q1.500 0 1.500 2.500T18.500 9H17z" fill="#222" /></Icon></TrayCell>
          <Clock><Label w={54}>7:48 PM</Label><Label w={77}>26/11/2023</Label></Clock>
          <TrayCell $w={40}>
            <Icon s={20} box="0 0 20 20"><path d="M2 14V9q0-7 6.500-7T15 9v5l2 2H0zM6 17.500h5q-.5 2-2.500 2T6 17.500z" fill="#1d1d22" /><path d="M5.500 7h4.500l-4.500 5h4.500" stroke="#e6dfea" strokeWidth="1.400" /><path d="M12.500 2H17l-4.500 5H17" stroke="#1d1d22" strokeWidth="1.500" /></Icon>
          </TrayCell>
        </Tray>
      </Taskbar>
    </Desktop>
  );
}
